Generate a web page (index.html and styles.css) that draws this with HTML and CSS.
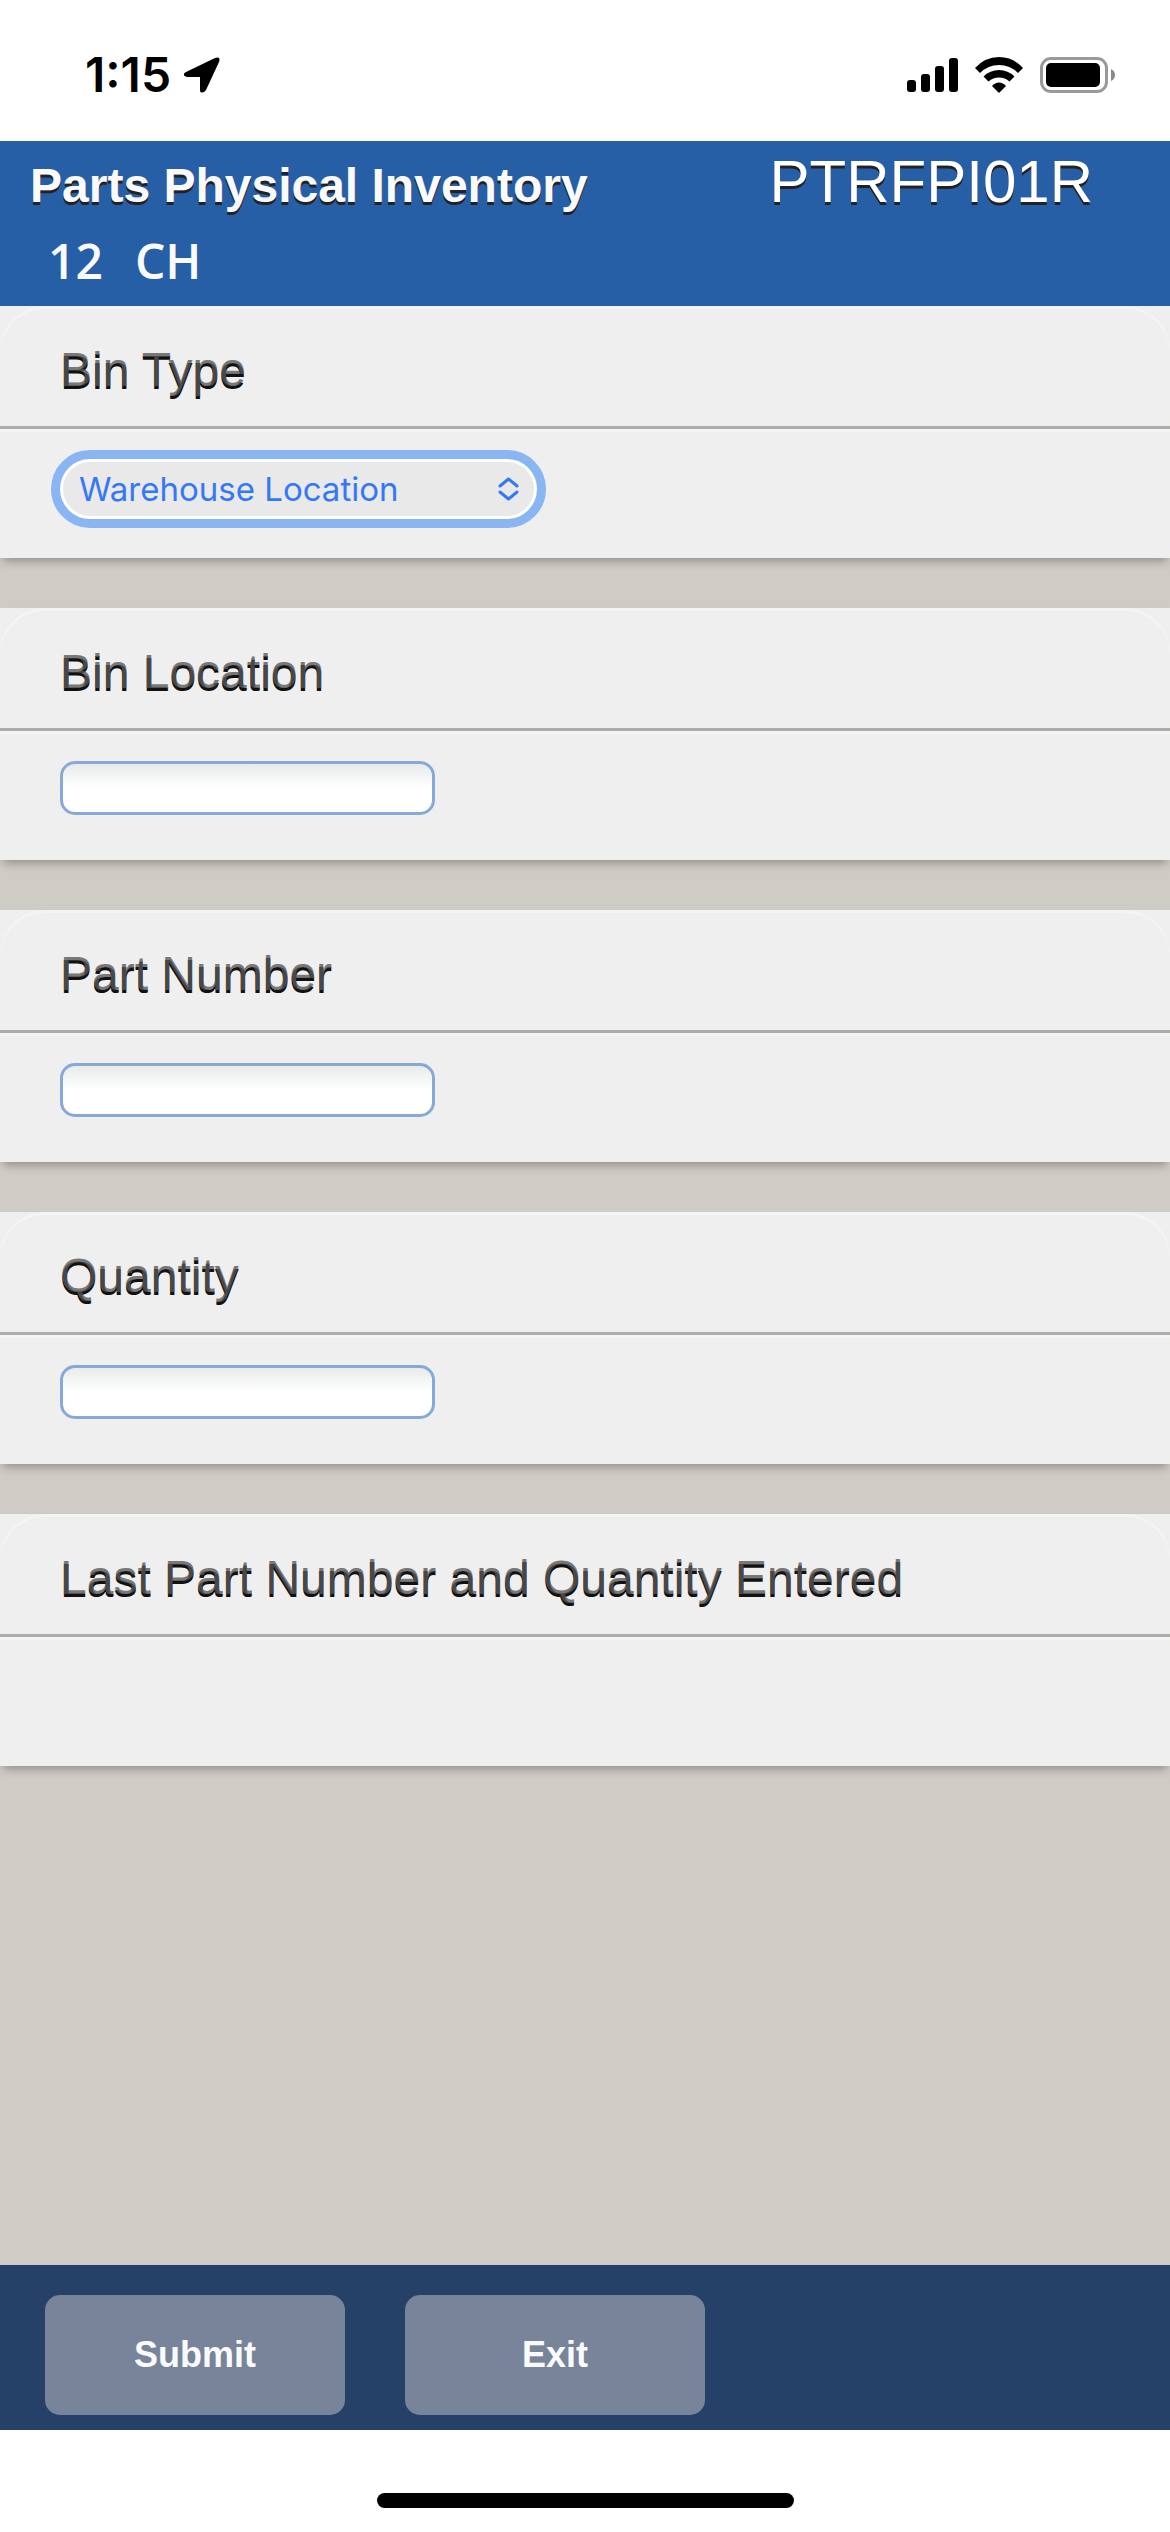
FILE: index.html
```
<!DOCTYPE html>
<html lang="en">
	<head>
		<meta charset="UTF-8" />
		<meta
			name="viewport"
			content="width=device-width, initial-scale=1.0" />
		<title>Parts Physical Inventory</title>
		<link rel="stylesheet" href="styles.css">
	</head>
	<body>
		<div class="status-bar">
			<div class="status-left">
				<span class="time">1:15</span>
				<svg class="arrow" width="36" height="36" viewBox="0 0 36 36">
					<path d="M2 15 L31 1 Q37 -1 35 5 L22 33 Q20 36 17 35.500 Q16 35 16 33 L16 20 L3 20 Q-1 19 0 17 Q0 16 2 15 Z" />
				</svg>
			</div>
			<div class="status-right">
				<svg class="signal" width="51" height="34" viewBox="0 0 51 34">
					<rect x="0" y="22" width="9" height="12" rx="3" />
					<rect x="14" y="16" width="9" height="18" rx="3" />
					<rect x="28" y="8" width="9" height="26" rx="3" />
					<rect x="42" y="0" width="9" height="34" rx="3" />
				</svg>
				<svg class="wifi" width="48" height="36" viewBox="0 0 48 36">
					<path d="M0 11 Q10 0 24 0 Q38 0 48 11 L43 16 Q35 8 24 8 Q13 8 5 16 Z" />
					<path d="M8.500 19.500 Q15 13 24 13 Q33 13 39.500 19.500 L34.500 24.500 Q30 20.500 24 20.500 Q18 20.500 13.500 24.500 Z" />
					<path d="M17 29 Q20 25.500 24 25.500 Q28 25.500 31 29 L24 36 Z" />
				</svg>
				<svg class="battery" width="75" height="36" viewBox="0 0 75 36">
					<rect x="1.500" y="1.500" width="65" height="33" rx="9.500" fill="none" stroke="#999" stroke-width="3" />
					<rect x="6" y="6" width="54" height="24" rx="5" />
					<path d="M71 12 Q75 14 75 18 Q75 22 71 24 Z" fill="#888" />
				</svg>
			</div>
		</div>

		<header>
			<div class="titles">
				<h1>Parts Physical Inventory</h1>
				<span class="program">PTRFPI01R</span>
			</div>
			<p class="branch"><span>12</span><span>CH</span></p>
		</header>

		<form id="inventory-form">
			<section class="field">
				<label for="bin-type">Bin Type</label>
				<div class="entry">
					<div class="select-wrap">
						<select id="bin-type">
							<option value="W">Warehouse Location</option>
						</select>
						<svg class="chevrons" width="21" height="24" viewBox="0 0 21 24">
							<path d="M2 9 L10.500 2 L19 9 M2 15 L10.500 22 L19 15" />
						</svg>
					</div>
				</div>
			</section>
			<section class="field">
				<label for="bin-location">Bin Location</label>
				<div class="entry">
					<input type="text" id="bin-location" />
				</div>
			</section>
			<section class="field">
				<label for="part-number">Part Number</label>
				<div class="entry">
					<input type="text" id="part-number" />
				</div>
			</section>
			<section class="field">
				<label for="quantity">Quantity</label>
				<div class="entry">
					<input type="text" id="quantity" />
				</div>
			</section>
			<section class="field">
				<h2>Last Part Number and Quantity Entered</h2>
				<div class="entry"></div>
			</section>
		</form>

		<footer>
			<button type="submit" form="inventory-form">Submit</button>
			<button type="button">Exit</button>
		</footer>
		<div class="home-area">
			<div class="home-bar"></div>
		</div>
	</body>
</html>
```
FILE: styles.css
```
* {
	box-sizing: border-box;
	margin: 0;
}

body {
	display: flex;
	flex-direction: column;
	min-height: 100vh;
	background-color: #fff;
	font-family: "Liberation Sans", Arial, sans-serif;
}

.status-bar {
	display: flex;
	justify-content: space-between;
	align-items: center;
	height: 141px;
	padding: 8px 55px 0 85px;
}

.status-left,
.status-right {
	display: flex;
	align-items: center;
}

.status-left {
	gap: 13px;
}

.status-right {
	gap: 17px;
}

.time {
	font-family: Inter, sans-serif;
	font-size: 48px;
	font-weight: 600;
}

header {
	height: 165px;
	padding: 0 77px 0 30px;
	background-color: #265fa5;
	color: #fff;
}

.titles {
	display: flex;
	justify-content: space-between;
	align-items: center;
	height: 80px;
	text-shadow: 0 3px 0 #222;
}

h1 {
	padding-top: 8px;
	font-size: 48px;
	color: #fafafa;
}

.program {
	font-size: 60px;
}

.branch {
	display: flex;
	gap: 32px;
	padding-left: 18px;
	font-family: "Open Sans", sans-serif;
	font-size: 48px;
	font-weight: 600;
	line-height: 80px;
	color: #fafafa;
}

form {
	flex: 1;
	display: flex;
	flex-direction: column;
	gap: 50px;
	background-color: #cfcbc5;
}

.field {
	background-color: #efefef;
	box-shadow: 0 6px 9px -3px rgba(0, 0, 0, 0.3);
}

.field label,
.field h2 {
	display: block;
	height: 120px;
	padding-left: 60px;
	border-radius: 45px 45px 0 0;
	box-shadow: inset 0 3px 0 #f4f4f4;
	font-size: 48px;
	font-weight: 400;
	line-height: 128px;
	color: rgba(87, 87, 87, 0.8);
	text-shadow: 0 3px 0 #111;
}

.entry {
	height: 132px;
	padding: 30px 60px;
	border-top: 3px solid #b0aba6;
	box-shadow: inset 0 3px 0 #f4f4f4;
}

.field input {
	display: block;
	width: 375px;
	height: 54px;
	padding: 0 12px;
	border: 3px solid #86a9d8;
	border-radius: 15px;
	background: linear-gradient(#e8ebea, #fff 50%);
	font-size: 36px;
}

.select-wrap {
	position: relative;
	width: 477px;
}

.select-wrap select {
	display: block;
	width: 100%;
	height: 60px;
	padding: 0 45px 0 16px;
	border: 3px solid #fff;
	border-radius: 30px;
	outline: 9px solid #89b6f3;
	appearance: none;
	background-color: #e9e9e9;
	font-family: Inter, sans-serif;
	font-size: 33px;
	color: #3478f6;
}

.chevrons {
	position: absolute;
	top: 18px;
	right: 18px;
	fill: none;
	stroke: #3478f6;
	stroke-width: 3;
	stroke-linecap: round;
	stroke-linejoin: round;
	pointer-events: none;
}

footer {
	display: flex;
	gap: 60px;
	height: 165px;
	padding: 30px 45px 15px;
	background-color: #254168;
}

button {
	width: 300px;
	height: 120px;
	padding: 0;
	border: none;
	border-radius: 15px;
	background-color: #78849a;
	font-family: inherit;
	font-size: 36px;
	font-weight: 700;
	color: #fafafa;
	cursor: pointer;
}

.home-area {
	display: flex;
	justify-content: center;
	height: 102px;
	padding-top: 63px;
}

.home-bar {
	width: 417px;
	height: 15px;
	border-radius: 8px;
	background-color: #000;
}
```
